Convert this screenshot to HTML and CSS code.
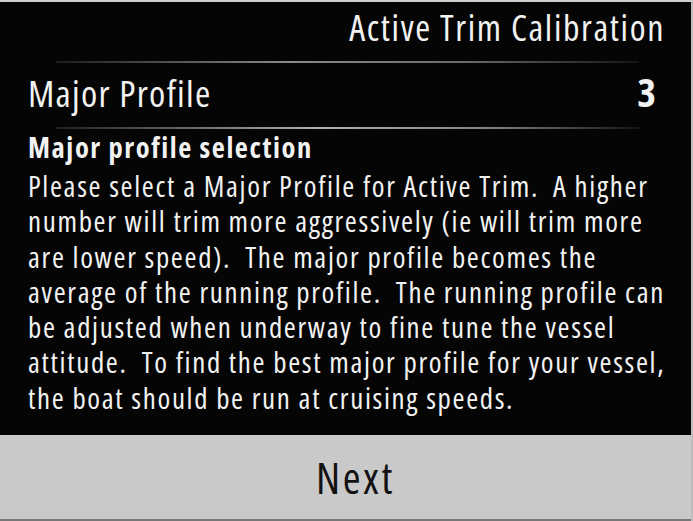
FILE: index.html
```html
<!DOCTYPE html>
<html lang="en">
<head>
  <meta charset="UTF-8" />
  <title>Active Trim Calibration</title>
  <link rel="stylesheet" href="styles.css">
</head>
<body>

  <!-- Header -->
  <div class="header">Active Trim Calibration</div>
  <div class="divider"></div>

  <!-- Profile value -->
  <div class="profile-row">
    <span class="profile-name">Major Profile</span>
    <span class="profile-value">3</span>
  </div>
  <div class="divider bright"></div>

  <!-- Help text -->
  <div class="help">
    <h3>Major profile selection</h3>
    <p>Please select a Major Profile for Active Trim.&nbsp; A higher<br>
    number will trim more aggressively (ie will trim more<br>
    are lower speed).&nbsp; The major profile becomes the<br>
    average of the running profile.&nbsp; The running profile can<br>
    be adjusted when underway to fine tune the vessel<br>
    attitude.&nbsp; To find the best major profile for your vessel,<br>
    the boat should be run at cruising speeds.</p>
  </div>

  <!-- Button -->
  <div class="next-btn">Next</div>

</body>
</html>
```

FILE: styles.css
```css
html, body {
  margin: 0;
  height: 100%;
}
body {
  font-family: "Open Sans", "Noto Sans", sans-serif;
  font-stretch: 75%;
  letter-spacing: 0.05em;
  background: #050505;
  color: #f2f2f2;
  border-top: 2px solid #d0d0d0;
  border-right: 2px solid #bdbdbd;
  box-sizing: border-box;
  display: flex;
  flex-direction: column;
  overflow: hidden;
}
.header {
  text-align: right;
  font-size: 36px;
  line-height: 46px;
  padding: 3px 26px 0 0;
  letter-spacing: 0.045em;
}
.divider {
  flex: none;
  height: 2px;
  margin: 10px 52px 0 56px;
  background: linear-gradient(to right, rgba(120,120,120,0.2), #8a8a8a 40%, #6a6a6a 70%, rgba(80,80,80,0.2));
}
.divider.bright {
  margin-top: 10px;
  background: linear-gradient(to right, rgba(140,140,140,0.2), #b0b0b0 45%, #808080 75%, rgba(80,80,80,0.2));
}
.profile-row {
  display: flex;
  justify-content: space-between;
  align-items: baseline;
  padding: 5px 35px 0 28px;
  line-height: 48px;
}
.profile-name {
  font-size: 37px;
  letter-spacing: 0.035em;
}
.profile-value {
  font-size: 40px;
  font-weight: bold;
  letter-spacing: 0;
}
.help {
  padding: 1px 0 0 28px;
  flex: 1;
  white-space: nowrap;
}
.help h3 {
  margin: 0;
  font-size: 28.5px;
  line-height: 34px;
  font-weight: bold;
  letter-spacing: 0.055em;
}
.help p {
  margin: 4px 0 0;
  font-size: 29px;
  line-height: 35.3px;
  letter-spacing: 0.057em;
}
.next-btn {
  flex: none;
  height: 84px;
  padding-left: 20px;
  background: #c9c9c9;
  border-bottom: 2px solid #777;
  color: #111;
  font-size: 43px;
  letter-spacing: 0.06em;
  display: flex;
  align-items: center;
  justify-content: center;
}
```
